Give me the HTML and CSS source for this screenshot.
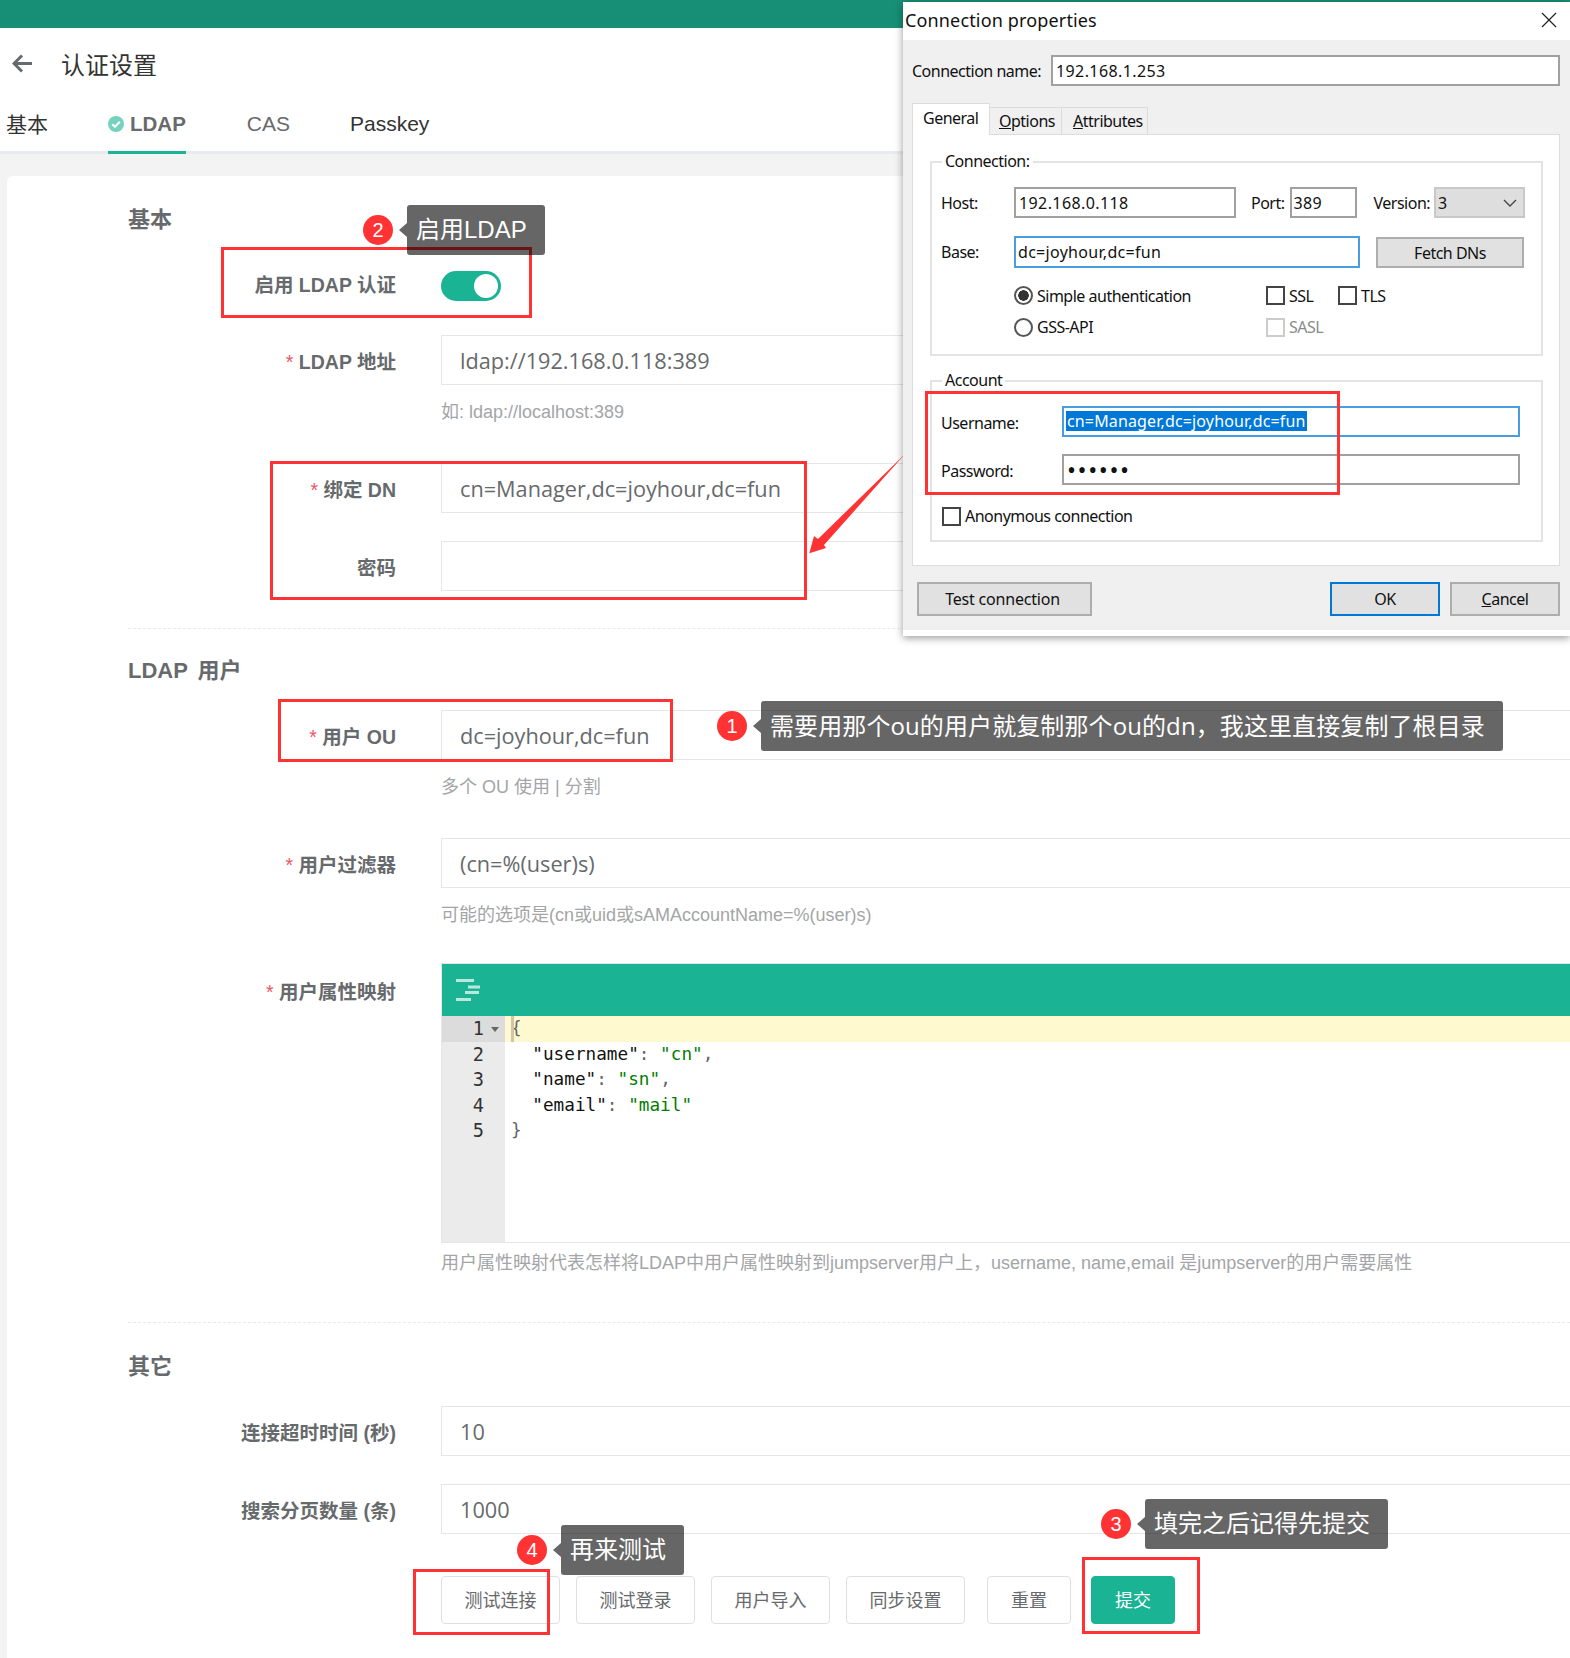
FILE: index.html
```html
<!DOCTYPE html>
<html lang="zh-CN">
<head>
    <meta charset="UTF-8">
    <title>认证设置</title>
    <link rel="stylesheet" href="styles.css">
</head>
<body>
    <div class="topbar"></div>

    <div class="page-head">
        <svg class="back-icon" width="21" height="19" viewBox="0 0 21 19"><path d="M20 9.5H2M10 1.5L2 9.5l8 8" fill="none" stroke="#676a6c" stroke-width="3"/></svg>
        <span class="page-title">认证设置</span>
    </div>

    <div class="tabs">
        <div class="tab tab-plain tab-cn">基本</div>
        <div class="tab tab-active">
            <svg width="16" height="16" viewBox="0 0 16 16"><circle cx="8" cy="8" r="8" fill="#76d1bf"/><path d="M4.2 8.2l2.7 2.6 4.9-5" fill="none" stroke="#fff" stroke-width="2"/></svg>
            LDAP
        </div>
        <div class="tab">CAS</div>
        <div class="tab tab-plain">Passkey</div>
    </div>

    <div class="main">
        <div class="card">
            <h3 class="section-title">基本</h3>
            <div class="row row-switch">
                <label class="row-label">启用 LDAP 认证</label>
                <div class="switch"><span class="knob"></span></div>
            </div>
            <div class="row row-help">
                <label class="row-label"><i>*</i> LDAP 地址</label>
                <div class="row-control">
                    <input type="text" value="ldap://192.168.0.118:389">
                    <p class="help">如: ldap://localhost:389</p>
                </div>
            </div>
            <div class="row">
                <label class="row-label"><i>*</i> 绑定 DN</label>
                <div class="row-control"><input type="text" value="cn=Manager,dc=joyhour,dc=fun"></div>
            </div>
            <div class="row row-last">
                <label class="row-label">密码</label>
                <div class="row-control"><input type="password"></div>
            </div>

            <div class="divider"></div>

            <h3 class="section-title">LDAP 用户</h3>
            <div class="row row-help">
                <label class="row-label"><i>*</i> 用户 OU</label>
                <div class="row-control">
                    <input type="text" value="dc=joyhour,dc=fun">
                    <p class="help">多个 OU 使用 | 分割</p>
                </div>
            </div>
            <div class="row row-help row-tight">
                <label class="row-label"><i>*</i> 用户过滤器</label>
                <div class="row-control">
                    <input type="text" value="(cn=%(user)s)">
                    <p class="help">可能的选项是(cn或uid或sAMAccountName=%(user)s)</p>
                </div>
            </div>
            <div class="row row-last">
                <label class="row-label label-editor"><i>*</i> 用户属性映射</label>
                <div class="row-control">
                    <div class="editor">
                        <div class="editor-bar">
                            <svg width="24" height="22" viewBox="0 0 24 22"><path d="M0 1.5h18M12 8h12M9 13.5h14M0 20.5h15" fill="none" stroke="#fff" stroke-opacity=".7" stroke-width="3"/></svg>
                        </div>
                        <div class="editor-body">
                            <div class="gutter">
                                <div class="gutter-line gutter-active">1<span class="fold"></span></div>
                                <div class="gutter-line">2</div>
                                <div class="gutter-line">3</div>
                                <div class="gutter-line">4</div>
                                <div class="gutter-line">5</div>
                            </div>
                            <div class="code">
                                <div class="code-line code-active"><span class="cursor"></span><span class="punct">{</span></div>
                                <div class="code-line">  "username"<span class="punct">:</span> <span class="str">"cn"</span><span class="punct">,</span></div>
                                <div class="code-line">  "name"<span class="punct">:</span> <span class="str">"sn"</span><span class="punct">,</span></div>
                                <div class="code-line">  "email"<span class="punct">:</span> <span class="str">"mail"</span></div>
                                <div class="code-line"><span class="punct">}</span></div>
                            </div>
                        </div>
                    </div>
                    <p class="help help-editor">用户属性映射代表怎样将LDAP中用户属性映射到jumpserver用户上，username, name,email 是jumpserver的用户需要属性</p>
                </div>
            </div>

            <div class="divider divider-low"></div>

            <h3 class="section-title">其它</h3>
            <div class="row">
                <label class="row-label">连接超时时间 (秒)</label>
                <div class="row-control"><input type="text" value="10"></div>
            </div>
            <div class="row row-last">
                <label class="row-label">搜索分页数量 (条)</label>
                <div class="row-control"><input type="text" value="1000"></div>
            </div>

            <div class="actions">
                <button class="btn">测试连接</button>
                <button class="btn">测试登录</button>
                <button class="btn">用户导入</button>
                <button class="btn">同步设置</button>
                <button class="btn btn-small btn-reset">重置</button>
                <button class="btn btn-small btn-primary">提交</button>
            </div>
        </div>
    </div>

    <svg class="arrow" width="110" height="110" viewBox="0 0 110 110"><polygon points="105,4 18,89 14,86 9.3,103.3 26,98 24,95" fill="#f33"/></svg>

    <div class="dialog">
        <div class="dlg-title">
            <span>Connection properties</span>
            <svg width="16" height="16" viewBox="0 0 16 16"><path d="M1 1l14 14M15 1L1 15" fill="none" stroke="#222" stroke-width="1.2"/></svg>
        </div>
        <div class="dlg-body">
            <div class="conn-name">
                <label class="conn-label">Connection name:</label>
                <input class="dlg-input dlg-grow ip-text" type="text" value="192.168.1.253">
            </div>
            <div class="dlg-tabs">
                <div class="dlg-tab dlg-tab-active">General</div>
                <div class="dlg-tab tab-options"><u>O</u>ptions</div>
                <div class="dlg-tab tab-attrs"><u>A</u>ttributes</div>
            </div>
            <div class="dlg-pane">
                <div class="group group-conn">
                    <span class="group-legend">Connection:</span>
                    <div class="dlg-row">
                        <label class="host-label">Host:</label>
                        <input class="dlg-input host-input ip-text" type="text" value="192.168.0.118">
                        <label class="port-label">Port:</label>
                        <input class="dlg-input port-input" type="text" value="389">
                        <label class="version-label">Version:</label>
                        <div class="version-select">3
                            <svg width="14" height="8" viewBox="0 0 14 8"><path d="M1 1l6 6 6-6" fill="none" stroke="#444" stroke-width="1.4"/></svg>
                        </div>
                    </div>
                    <div class="dlg-row base-row">
                        <label class="host-label">Base:</label>
                        <input class="dlg-input dlg-focus base-input" type="text" value="dc=joyhour,dc=fun">
                        <button class="dlg-btn fetch-btn">Fetch DNs</button>
                    </div>
                    <div class="auth-grid">
                        <div class="opt"><span class="radio radio-on"></span>Simple authentication</div>
                        <div class="opt"><span class="check"></span>SSL</div>
                        <div class="opt"><span class="check"></span>TLS</div>
                        <div class="opt"><span class="radio"></span>GSS-API</div>
                        <div class="opt opt-off"><span class="check"></span>SASL</div>
                    </div>
                </div>
                <div class="group group-account">
                    <span class="group-legend">Account</span>
                    <div class="dlg-row">
                        <label class="user-label">Username:</label>
                        <div class="dlg-input dlg-focus user-input"><span class="selected">cn=Manager,dc=joyhour,dc=fun</span></div>
                    </div>
                    <div class="dlg-row pass-row">
                        <label class="user-label">Password:</label>
                        <div class="dlg-input user-input dots">••••••</div>
                    </div>
                    <div class="opt anon"><span class="check"></span>Anonymous connection</div>
                </div>
            </div>
            <div class="dlg-actions">
                <button class="dlg-btn test-btn">Test connection</button>
                <button class="dlg-btn ok-btn">OK</button>
                <button class="dlg-btn cancel-btn"><u>C</u>ancel</button>
            </div>
        </div>
    </div>

    <div class="mark mark-switch"></div>
    <div class="mark mark-dn"></div>
    <div class="mark mark-ou"></div>
    <div class="mark mark-user"></div>
    <div class="mark mark-test"></div>
    <div class="mark mark-submit"></div>

    <div class="callout callout-1"><span class="badge">1</span><span class="tip">需要用那个ou的用户就复制那个ou的dn，我这里直接复制了根目录</span></div>
    <div class="callout callout-2"><span class="badge">2</span><span class="tip">启用LDAP</span></div>
    <div class="callout callout-3"><span class="badge">3</span><span class="tip">填完之后记得先提交</span></div>
    <div class="callout callout-4"><span class="badge">4</span><span class="tip">再来测试</span></div>
</body>
</html>
```
FILE: styles.css
```css
* {
    box-sizing: border-box;
}

html, body {
    height: 1658px;
}

body {
    position: relative;
    margin: 0;
    overflow: hidden;
    background: #fff;
    color: #676a6c;
    font-family: "Liberation Sans", "Noto Sans CJK SC", sans-serif;
}

.topbar {
    height: 28px;
    background: #178f76;
}

.page-head {
    display: flex;
    align-items: center;
    height: 72px;
    padding: 0 0 2px 12px;
}

.page-title {
    margin-left: 28px;
    color: #333;
    font-size: 24px;
}

.tabs {
    display: flex;
    gap: 60px;
    height: 54px;
    padding-left: 6px;
    border-bottom: 3px solid #e7eaef;
    font-size: 21px;
}

.tab {
    display: flex;
    align-items: center;
    gap: 7px;
    height: 54px;
    padding-bottom: 7px;
}

.tab-plain {
    color: #333;
}

.tab-cn {
    padding-bottom: 9px;
}

.tab-active {
    gap: 6px;
    margin-right: 1px;
    padding-bottom: 4px;
    border-bottom: 3px solid #1ab394;
    font-size: 20.5px;
    font-weight: bold;
}

.main {
    height: 1504px;
    padding: 22px 0 0 7px;
    background: #f3f3f4;
}

.card {
    height: 100%;
    margin-right: -20px;
    padding: 29px 0 0 121px;
    border-radius: 6px 0 0 0;
    background: #fff;
}

.section-title {
    height: 30px;
    margin: 0 0 24px;
    font-size: 22px;
    font-weight: bold;
    line-height: 30px;
    word-spacing: 4px;
}

.row {
    display: flex;
    gap: 45px;
    margin-bottom: 28px;
}

.row-help {
    margin-bottom: 39px;
}

.row-tight {
    margin-bottom: 36px;
}

.row-last {
    margin-bottom: 0;
}

.row-switch {
    align-items: center;
    margin: 36px 0 34px;
}

.row-label {
    flex: none;
    width: 268px;
    height: 50px;
    font-size: 19.5px;
    font-weight: bold;
    line-height: 55px;
    text-align: right;
}

.label-editor {
    line-height: 58px;
}

.row-switch .row-label {
    height: 30px;
    padding-bottom: 2px;
    line-height: 28px;
}

.row-label i {
    color: #ed5565;
    font-style: normal;
    font-weight: normal;
}

.row-control {
    flex: 1;
    min-width: 0;
}

.row-control input {
    display: block;
    width: 100%;
    height: 50px;
    padding: 1px 18px 0;
    border: 1px solid #e5e6e7;
    outline: none;
    background: #fff;
    color: #676a6c;
    font-family: "Open Sans", "Noto Sans CJK SC", sans-serif;
    font-size: 21.7px;
}

.help {
    margin: 15px 0 0;
    color: #a3a5a7;
    font-size: 18px;
    line-height: 24px;
}

.help-editor {
    margin-top: 8px;
}

.switch {
    position: relative;
    width: 60px;
    height: 30px;
    border-radius: 15px;
    background: #1ab394;
}

.knob {
    position: absolute;
    top: 3px;
    right: 3px;
    width: 24px;
    height: 24px;
    border-radius: 50%;
    background: #fff;
}

.divider {
    margin: 37px 0 27px;
    border-top: 1px dashed #e7eaec;
}

.divider-low {
    margin: 47px 0 29px;
}

.editor {
    border: 1px solid #e5e6e7;
}

.editor-bar {
    display: flex;
    align-items: center;
    height: 52px;
    padding-left: 14px;
    background: #1ab394;
}

.editor-body {
    display: flex;
    height: 226px;
    font-family: "DejaVu Sans Mono", monospace;
    font-size: 17.7px;
    line-height: 25.5px;
}

.gutter {
    flex: none;
    width: 63px;
    background: #ebebeb;
    color: #333;
    font-size: 18.6px;
}

.gutter-line {
    position: relative;
    padding-right: 21px;
    text-align: right;
}

.gutter-active {
    background: #dcdcdc;
}

.fold {
    position: absolute;
    top: 11px;
    right: 6px;
    border-top: 5px solid #666;
    border-right: 4px solid transparent;
    border-left: 4px solid transparent;
}

.code {
    flex: 1;
    color: #111;
}

.code-line {
    height: 25.5px;
    padding-left: 6px;
    white-space: pre;
}

.code-active {
    position: relative;
    background: #fff9cf;
}

.cursor {
    position: absolute;
    top: 0;
    left: 6px;
    width: 3px;
    height: 25.5px;
    background: #cfc8a8;
}

.punct {
    color: #666;
}

.str {
    color: #007c00;
}

.actions {
    display: flex;
    gap: 16px;
    margin: 42px 0 0 313px;
}

.btn {
    width: 119px;
    height: 48px;
    padding: 0 0 2px;
    border: 1px solid #dcdfe6;
    border-radius: 4px;
    background: #fff;
    color: #676a6c;
    font-family: "Liberation Sans", "Noto Sans CJK SC", sans-serif;
    font-size: 18px;
}

.btn-small {
    width: 84px;
}

.btn-reset {
    margin: 0 4px 0 6px;
}

.btn-primary {
    border-color: #1ab394;
    background: #1ab394;
    color: #fff;
}

/* annotations drawn on top of the screenshot */
.arrow {
    position: absolute;
    top: 450px;
    left: 800px;
}

.mark {
    position: absolute;
    border: 3px solid #f33;
}

.mark-switch {
    top: 247px;
    left: 221px;
    width: 311px;
    height: 71px;
}

.mark-dn {
    top: 461px;
    left: 270px;
    width: 537px;
    height: 139px;
}

.mark-ou {
    top: 699px;
    left: 278px;
    width: 395px;
    height: 63px;
}

.mark-user {
    top: 391px;
    left: 925px;
    width: 415px;
    height: 104px;
}

.mark-test {
    top: 1569px;
    left: 413px;
    width: 137px;
    height: 66px;
}

.mark-submit {
    top: 1557px;
    left: 1082px;
    width: 118px;
    height: 77px;
}

.callout {
    position: absolute;
    display: flex;
    align-items: center;
    gap: 14px;
}

.callout-1 {
    top: 701px;
    left: 717px;
}

.callout-1 .tip {
    font-family: "Open Sans", "Noto Sans CJK SC", sans-serif;
    letter-spacing: .1px;
}

.callout-2 {
    top: 205px;
    left: 363px;
}

.callout-3 {
    top: 1499px;
    left: 1101px;
}

.callout-4 {
    top: 1525px;
    left: 517px;
}

.badge {
    width: 30px;
    height: 30px;
    border-radius: 50%;
    background: #f33;
    color: #fff;
    font-size: 20px;
    line-height: 30px;
    text-align: center;
}

.tip {
    position: relative;
    height: 50px;
    padding: 0 18px 0 9px;
    border-radius: 3px;
    background: rgba(0, 0, 0, .6);
    color: #fff;
    font-size: 24px;
    line-height: 50px;
    white-space: nowrap;
}

.tip::before {
    content: "";
    position: absolute;
    top: 18px;
    left: -8px;
    border-top: 7px solid transparent;
    border-right: 8px solid #666;
    border-bottom: 7px solid transparent;
}

/* connection dialog */
.dialog {
    position: absolute;
    top: 2px;
    left: 903px;
    width: 667px;
    height: 634px;
    background: #fff;
    box-shadow: 0 2px 8px rgba(0, 0, 0, .4);
    color: #111;
    font-family: "Noto Sans", sans-serif;
    font-size: 16px;
    letter-spacing: -.5px;
}

.dlg-title {
    display: flex;
    align-items: center;
    justify-content: space-between;
    height: 38px;
    padding: 0 13px 2px 2px;
    font-size: 18px;
    letter-spacing: .15px;
}

.dlg-body {
    height: 590px;
    padding: 15px 10px 0 9px;
    background: #f0f0f0;
}

.conn-name {
    display: flex;
    align-items: center;
    height: 31px;
}

.conn-label {
    flex: none;
    width: 139px;
}

.dlg-input {
    display: block;
    height: 31px;
    padding: 0 2px;
    border: 2px solid #a0a0a0;
    outline: none;
    background: #fff;
    color: #111;
    font-family: "Noto Sans", sans-serif;
    font-size: 16px;
    line-height: 27px;
    letter-spacing: .3px;
}

.ip-text {
    padding-left: 3px;
    letter-spacing: .4px;
}

.dlg-grow {
    flex: 1;
    min-width: 0;
}

.dlg-focus {
    border-color: #4a9de0;
}

.dlg-tabs {
    display: flex;
    align-items: flex-end;
    height: 31px;
    margin-top: 17px;
}

.dlg-tab {
    display: flex;
    align-items: center;
    height: 28px;
    margin-bottom: -1px;
    padding-left: 9px;
    border: 1px solid #dcdcdc;
    border-left: none;
}

.tab-options {
    width: 72px;
}

.tab-attrs {
    width: 86px;
    padding-left: 11px;
}

.dlg-tab-active {
    position: relative;
    z-index: 1;
    width: 78px;
    height: 32px;
    padding: 0 0 4px 10px;
    border-left: 1px solid #dcdcdc;
    border-bottom: none;
    background: #fff;
}

.dlg-pane {
    height: 432px;
    padding: 26px 16px 0 17px;
    border: 1px solid #dcdcdc;
    background: #fff;
}

.group {
    position: relative;
    padding: 24px 0 0 9px;
    border: 2px solid #e3e3e3;
}

.group-conn {
    height: 195px;
}

.group-account {
    height: 162px;
    margin-top: 24px;
}

.group-legend {
    position: absolute;
    top: -13px;
    left: 10px;
    padding: 0 3px;
    background: #fff;
}

.dlg-row {
    display: flex;
    align-items: center;
}

.host-label {
    flex: none;
    width: 73px;
}

.host-input {
    width: 222px;
}

.port-label {
    margin: 0 5px 0 15px;
}

.port-input {
    width: 67px;
}

.version-label {
    margin: 0 4px 0 17px;
}

.version-select {
    display: flex;
    align-items: center;
    justify-content: space-between;
    width: 91px;
    height: 31px;
    padding: 0 6px 0 2px;
    border: 2px solid #c8c8c8;
    background: #dedede;
}

.base-row {
    margin-top: 17px;
}

.base-input {
    width: 346px;
    height: 32px;
}

.dlg-btn {
    height: 34px;
    padding: 0;
    border: 2px solid #adadad;
    background: #e1e1e1;
    color: #111;
    font-family: "Noto Sans", sans-serif;
    font-size: 16px;
    letter-spacing: -.5px;
}

.fetch-btn {
    width: 148px;
    height: 31px;
    margin: 2px 0 0 16px;
}

.auth-grid {
    display: grid;
    grid-template-columns: 252px 72px auto;
    grid-auto-rows: 31.5px;
    margin: 12px 0 0 73px;
}

.opt {
    display: flex;
    align-items: center;
    gap: 4px;
}

.opt-off {
    color: #8a8a8a;
}

.radio {
    width: 19px;
    height: 19px;
    border: 2px solid #555;
    border-radius: 50%;
}

.radio-on {
    border-color: #555;
    background: radial-gradient(circle, #333 0 5px, #fff 5.5px);
}

.check {
    width: 19px;
    height: 19px;
    border: 2px solid #444;
    background: #fff;
}

.opt-off .check {
    border-color: #ccc;
}

.user-label {
    flex: none;
    width: 121px;
    padding-top: 2px;
}

.user-input {
    width: 458px;
    height: 31px;
    white-space: nowrap;
}

.selected {
    display: inline-block;
    margin-top: 2px;
    padding: 0 1px;
    background: #0078d7;
    color: #fff;
    letter-spacing: .15px;
    line-height: 20px;
}

.pass-row {
    margin-top: 17px;
}

.dots {
    padding-left: 3px;
    font-size: 24px;
    letter-spacing: 1.6px;
}

.anon {
    margin: 20px 0 0 1px;
}

.dlg-actions {
    display: flex;
    gap: 10px;
    margin-top: 16px;
}

.test-btn {
    width: 175px;
    margin-left: 5px;
    padding-right: 4px;
    letter-spacing: -.2px;
}

.ok-btn {
    width: 110px;
    margin-left: auto;
    border-color: #0078d7;
}

.cancel-btn {
    width: 110px;
}
```
